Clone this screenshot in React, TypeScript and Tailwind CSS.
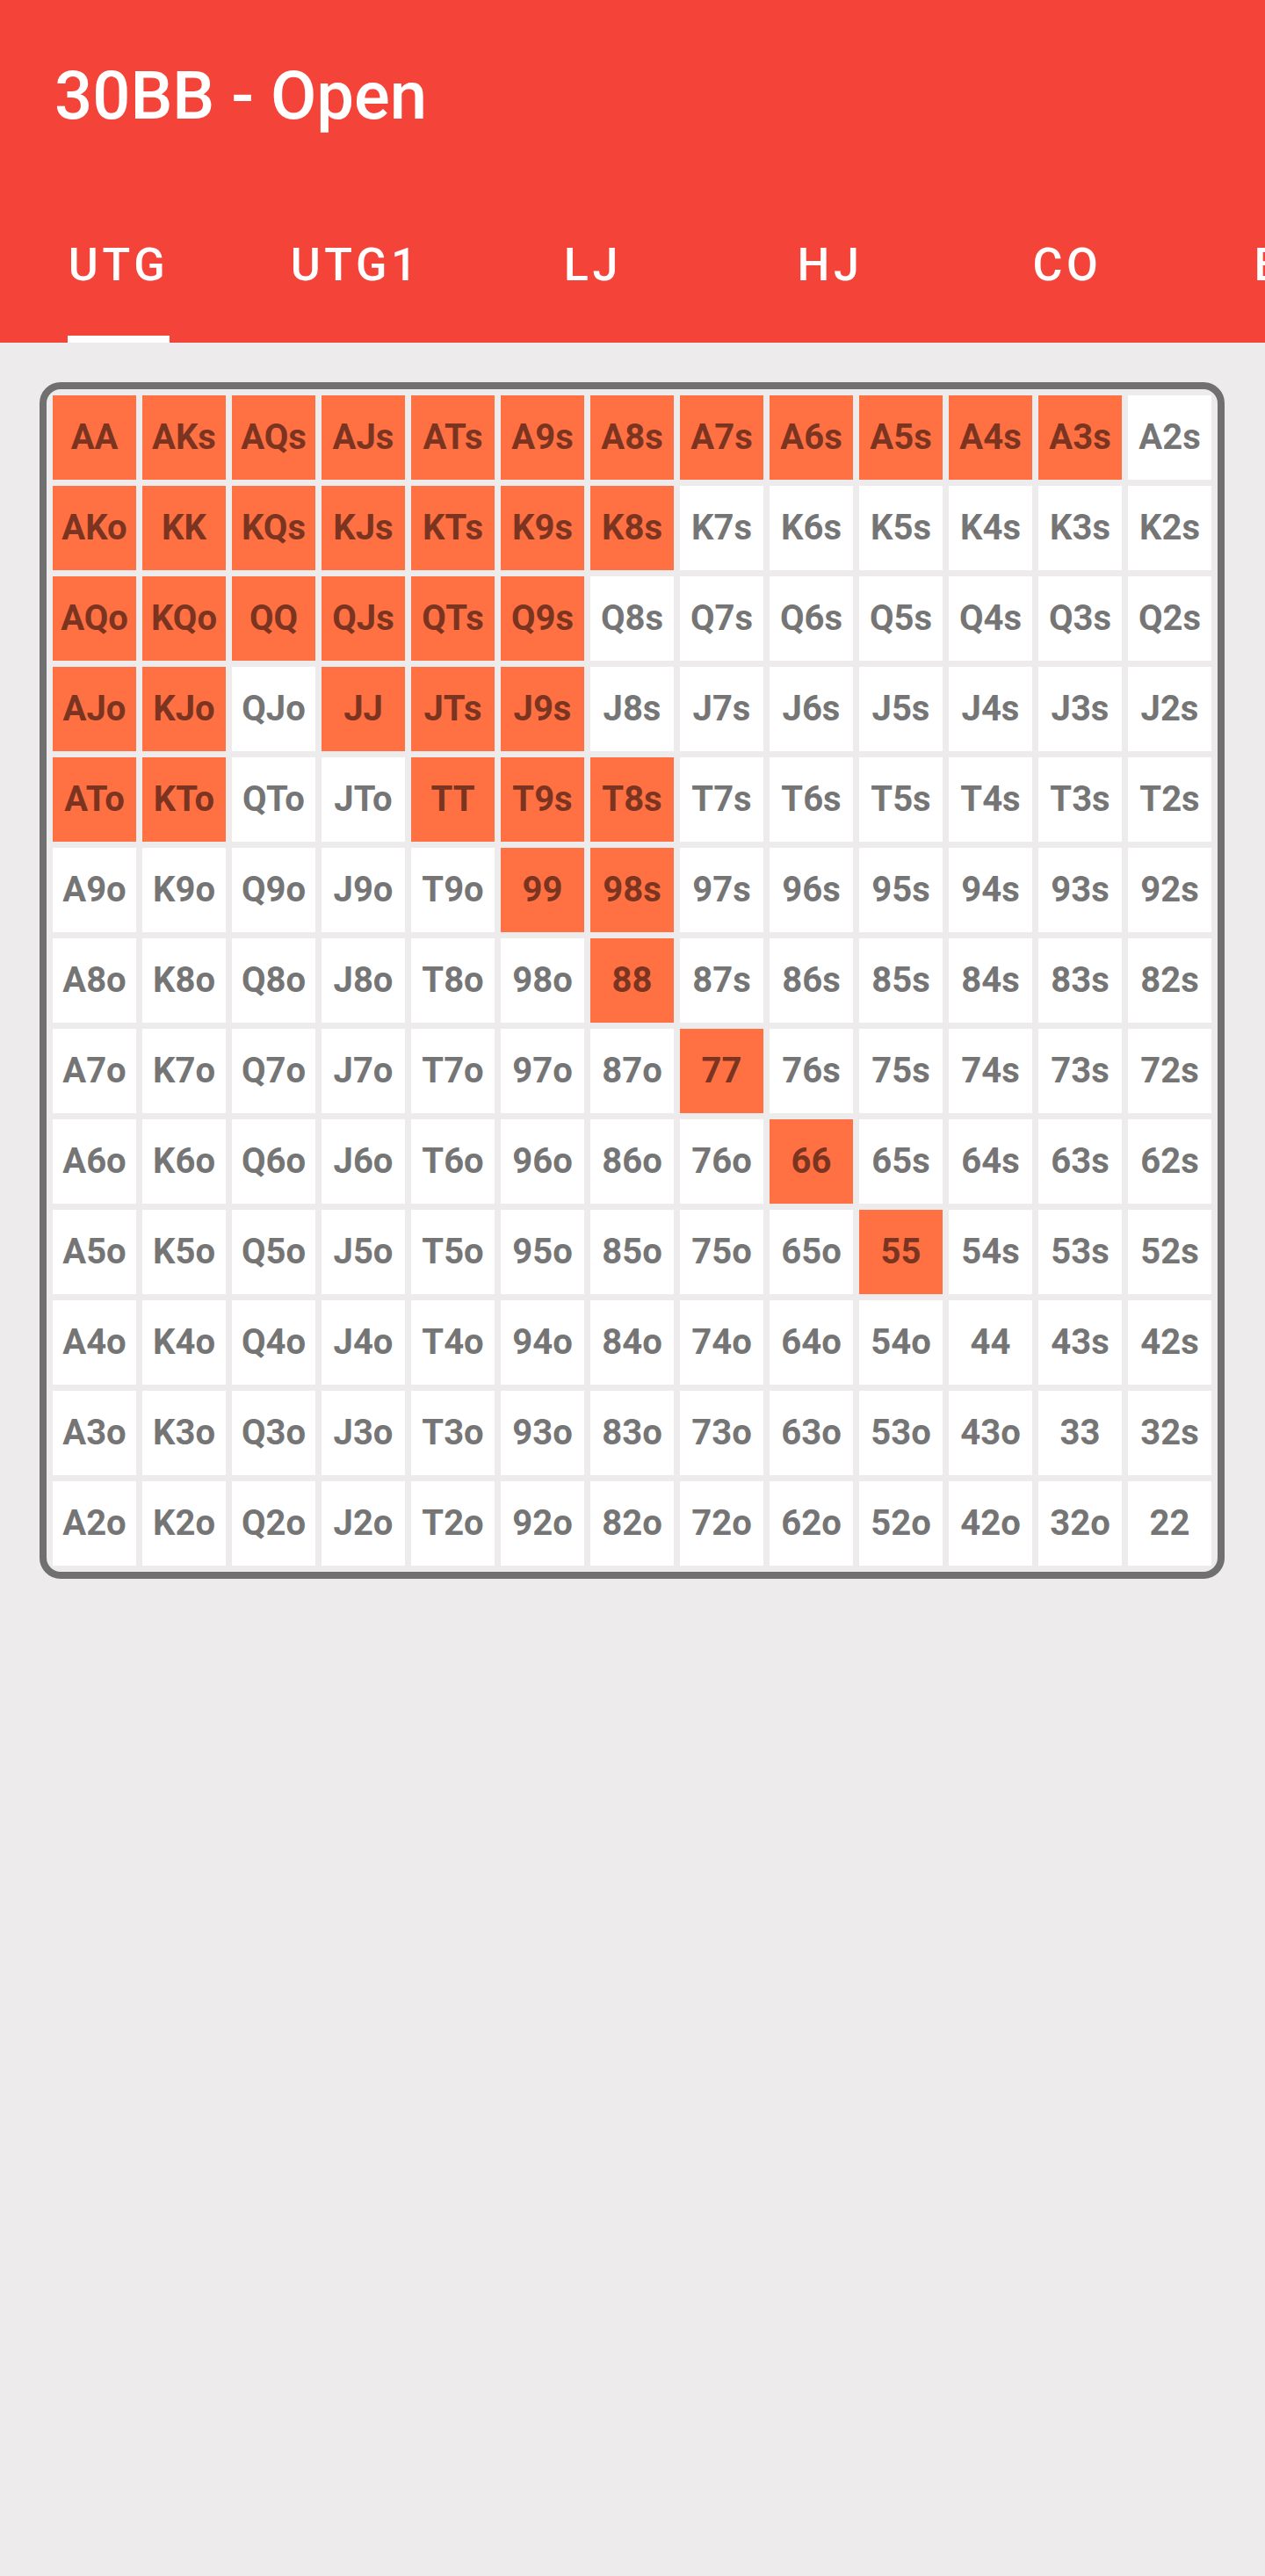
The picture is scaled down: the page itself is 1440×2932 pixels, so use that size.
import React from 'react';

const RANKS = ['A', 'K', 'Q', 'J', 'T', '9', '8', '7', '6', '5', '4', '3', '2'];

// open range for UTG, [row] -> columns that are in
const OPEN: Record<number, number[]> = {
  0: [0, 1, 2, 3, 4, 5, 6, 7, 8, 9, 10, 11],
  1: [0, 1, 2, 3, 4, 5, 6],
  2: [0, 1, 2, 3, 4, 5],
  3: [0, 1, 3, 4, 5],
  4: [0, 1, 4, 5, 6],
  5: [5, 6],
  6: [6],
  7: [7],
  8: [8],
  9: [9],
};

const TABS = ['UTG', 'UTG1', 'LJ', 'HJ', 'CO', 'BTN', 'SB'];

const handName = (r: number, c: number) => {
  if (r === c) return RANKS[r] + RANKS[c];
  if (c > r) return RANKS[r] + RANKS[c] + 's';
  return RANKS[c] + RANKS[r] + 'o';
};

const App: React.FC = () => {
  return (
    <div
      className="min-h-screen bg-[#edebec]"
      style={{ fontFamily: 'Roboto, "Noto Sans", sans-serif' }}
    >
      <header className="bg-[#f4443a] text-white">
        <div className="h-[210px] flex items-center px-[62px] pt-[8px]">
          <h1 className="text-[76px] font-medium leading-none">30BB - Open</h1>
        </div>
        <nav className="h-[180px] flex overflow-hidden">
          {TABS.map((t, i) => (
            <div key={t} className="w-[270px] shrink-0 flex flex-col items-center">
              <div className="flex-1 flex items-center pt-[12px] text-[52px] font-medium tracking-[0.09em] leading-none">
                {t}
              </div>
              <div className={i === 0 ? 'h-[8px] w-[116px] bg-white' : 'h-[8px]'}></div>
            </div>
          ))}
        </nav>
      </header>

      <main className="pt-[45px] pl-[45px] pr-[46px]">
        <div className="border-[8px] border-[#707070] rounded-[24px] p-[7px] bg-[#edebec]">
          <div className="grid grid-cols-13 gap-[7px]">
            {RANKS.map((_, r) =>
              RANKS.map((__, c) => {
                const on = (OPEN[r] || []).includes(c);
                return (
                  <div
                    key={`${r}-${c}`}
                    className={
                      on
                        ? 'h-[96px] flex items-center justify-center bg-[#ff7043] text-[#7a3420] text-[40px] font-bold'
                        : 'h-[96px] flex items-center justify-center bg-white text-[#757575] text-[40px] font-bold'
                    }
                  >
                    {handName(r, c)}
                  </div>
                );
              })
            )}
          </div>
        </div>
      </main>
    </div>
  );
};

export default App;
